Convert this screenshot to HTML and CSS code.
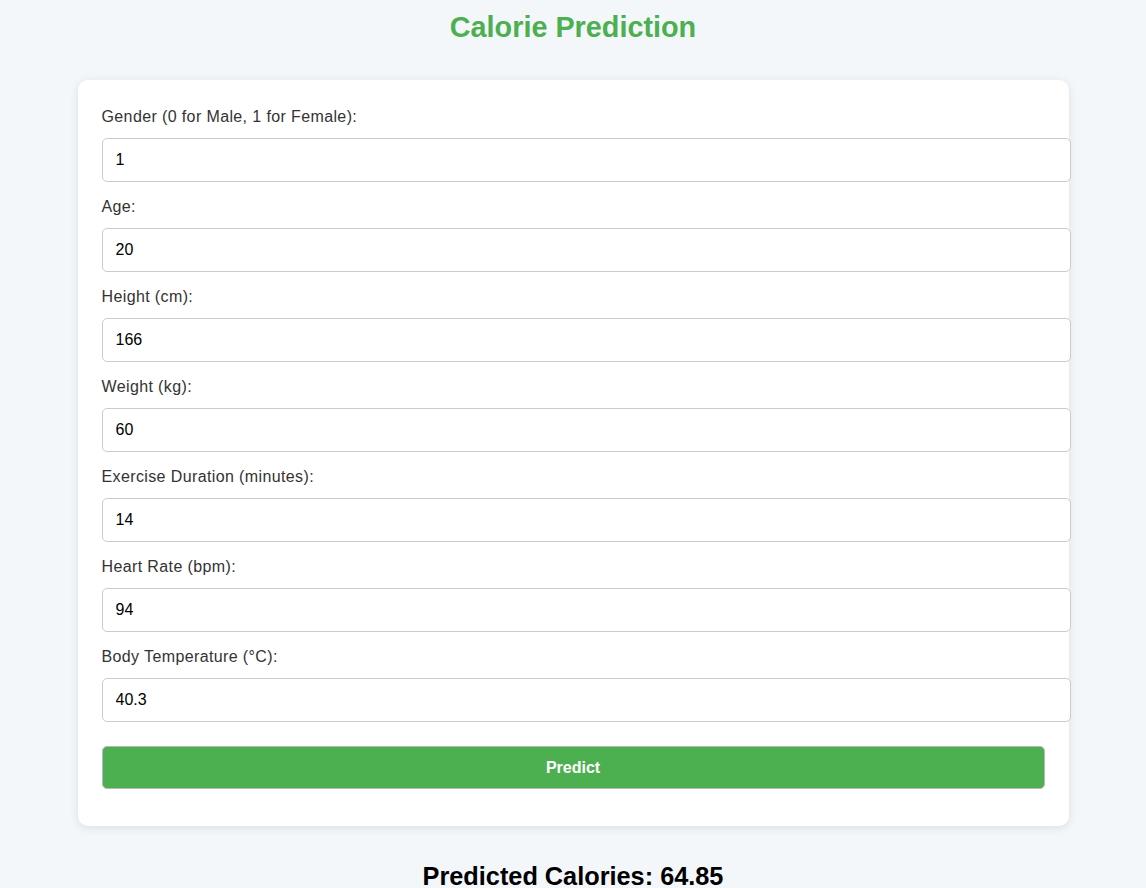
FILE: index.html
```html
<!DOCTYPE html>
<html lang="en">
<head>
<meta charset="utf-8">
<title>Calorie Prediction</title>
<link rel="stylesheet" href="styles.css">
</head>
<body>
<h1 class="title">Calorie Prediction</h1>
<form class="card">
  <div class="field">
    <label class="label">Gender (0 for Male, 1 for Female):</label>
    <input class="input" type="text" value="1">
  </div>
  <div class="field">
    <label class="label">Age:</label>
    <input class="input" type="text" value="20">
  </div>
  <div class="field">
    <label class="label">Height (cm):</label>
    <input class="input" type="text" value="166">
  </div>
  <div class="field">
    <label class="label">Weight (kg):</label>
    <input class="input" type="text" value="60">
  </div>
  <div class="field">
    <label class="label">Exercise Duration (minutes):</label>
    <input class="input" type="text" value="14">
  </div>
  <div class="field">
    <label class="label">Heart Rate (bpm):</label>
    <input class="input" type="text" value="94">
  </div>
  <div class="field">
    <label class="label">Body Temperature (°C):</label>
    <input class="input" type="text" value="40.3">
  </div>
  <button class="btn" type="button">Predict</button>
</form>
<h2 class="result">Predicted Calories: 64.85</h2>
</body>
</html>
```
FILE: styles.css
```css
html, body {
  margin: 0;
  padding: 0;
}
body {
  background: #f4f7fa;
  font-family: "Liberation Sans", Arial, sans-serif;
  color: #333;
}
.title {
  margin: 10px 0 36px;
  font-size: 28.8px;
  line-height: 34px;
  font-weight: bold;
  color: #4caf50;
  text-align: center;
}
.card {
  box-sizing: border-box;
  max-width: 991px;
  margin: 0 auto;
  padding: 28px 24px 37px;
  background: #fff;
  border-radius: 10px;
  box-shadow: 0 2px 10px rgba(0, 0, 0, 0.1);
}
.field {
  margin-bottom: 16px;
}
.field:last-of-type {
  margin-bottom: 14px;
}
.label {
  display: block;
  font-size: 16px;
  line-height: 18px;
  letter-spacing: 0.38px;
  color: #333;
  margin-bottom: 12px;
}
.input {
  display: block;
  box-sizing: content-box;
  width: 100%;
  height: 18px;
  padding: 12px 11px 12px 13px;
  margin: 0;
  border: 1px solid #ccc;
  border-radius: 5px;
  background: #fff;
  font-family: "Liberation Sans", Arial, sans-serif;
  font-size: 16px;
  color: #000;
  outline: none;
}
.btn {
  display: block;
  box-sizing: border-box;
  width: 100%;
  height: 43px;
  margin-top: 24px;
  padding: 0;
  border: 1px solid #b8b8b8;
  border-radius: 5px;
  background: #4caf50;
  color: #fff;
  font-family: "Liberation Sans", Arial, sans-serif;
  font-size: 16px;
  font-weight: bold;
  cursor: pointer;
}
.result {
  margin: 36px 0 0;
  font-size: 25.3px;
  line-height: 29px;
  font-weight: bold;
  color: #000;
  text-align: center;
}
```
